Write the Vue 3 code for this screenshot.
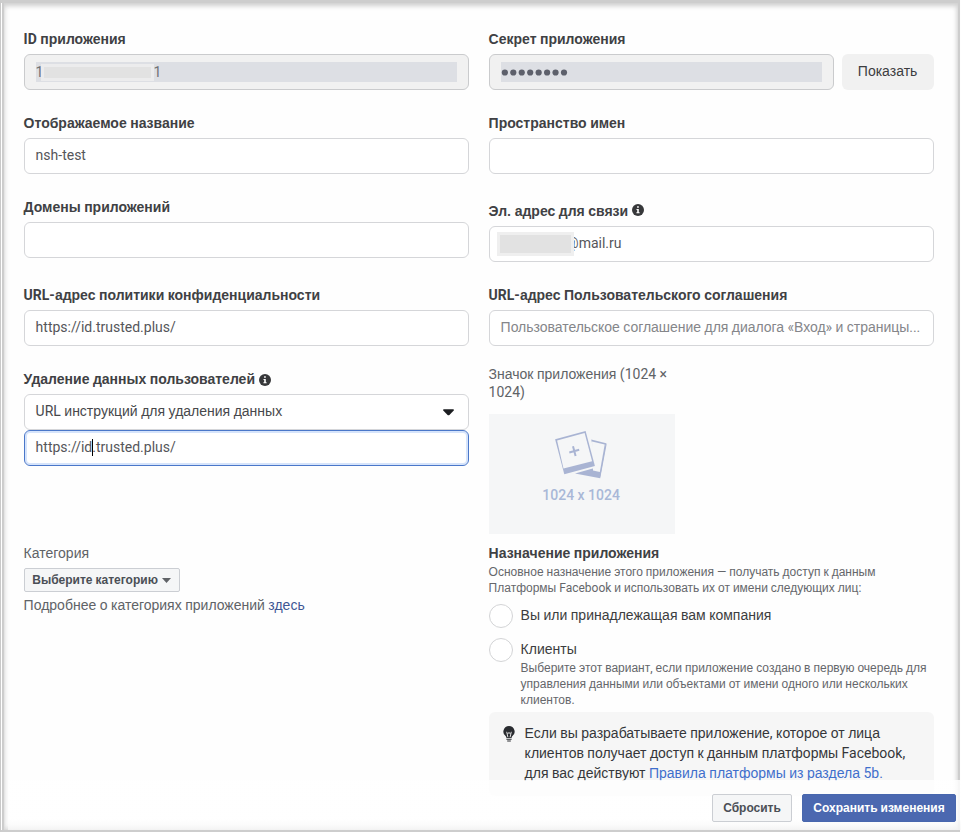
<script setup>
import { h } from 'vue'

// Latin runs, digits and spaces use Roboto; Cyrillic runs use the fallback face.
const T = (props) =>
  h('span', (props.t.match(/[А-Яа-яЁё]+|[^А-Яа-яЁё]+/g) || []).map((run) =>
    /[А-Яа-яЁё]/.test(run) ? run : h('span', { class: 'latin' }, run)
  ))
T.props = ['t']
</script>

<template>
  <div class="page">
    <main class="columns">
      <section class="col">
        <div class="field">
          <label class="label"><T t="ID приложения" /></label>
          <div class="input disabled">
            <div class="value-fill"><T t="1" /><span class="mask mask-id"></span><T t="1" /></div>
          </div>
        </div>
        <div class="field">
          <label class="label"><T t="Отображаемое название" /></label>
          <div class="input"><T t="nsh-test" /></div>
        </div>
        <div class="field">
          <label class="label"><T t="Домены приложений" /></label>
          <div class="input"></div>
        </div>
        <div class="field wide-gap">
          <label class="label"><T t="URL-адрес политики конфиденциальности" /></label>
          <div class="input"><T t="https://id.trusted.plus/" /></div>
        </div>
        <div class="field">
          <label class="label">
            <T t="Удаление данных пользователей" />
            <svg class="info" viewBox="0 0 12 12"><circle cx="6" cy="6" r="6" /><path d="M4.5 4.9h2.3v3.4h.8v1H4.4v-1h.8V5.9h-.7zM5.1 2.2h1.7v1.6H5.1z" /></svg>
          </label>
          <div class="input select">
            <T t="URL инструкций для удаления данных" />
            <svg class="caret" viewBox="0 0 12 7"><path d="M1 0h10q1 0 1 1L7 6.2q-1 .8-2 0L0 1q0-1 1-1z" /></svg>
          </div>
          <div class="input focused"><T t="https://id" /><span class="cursor"></span><T t=".trusted.plus/" /></div>
        </div>
        <div class="category">
          <div class="plain-label">Категория</div>
          <button class="btn category-btn">
            <T t="Выберите категорию" />
            <svg class="small-caret" viewBox="0 0 9 5"><path d="M0 0h9L4.5 5z" /></svg>
          </button>
          <div class="more"><T t="Подробнее о категориях приложений " /><a class="link-dark">здесь</a></div>
        </div>
      </section>

      <section class="col">
        <div class="field">
          <label class="label"><T t="Секрет приложения" /></label>
          <div class="secret-row">
            <div class="input disabled">
              <div class="value-fill">
                <svg class="dots" width="68" height="7" viewBox="0 0 68 7"><circle v-for="n in 8" :key="n" :cx="8.45 * n - 4.6" cy="3.5" r="3.1" /></svg>
              </div>
            </div>
            <button class="show">Показать</button>
          </div>
        </div>
        <div class="field">
          <label class="label"><T t="Пространство имен" /></label>
          <div class="input"></div>
        </div>
        <div class="field wide-gap">
          <label class="label">
            <T t="Эл. адрес для связи" />
            <svg class="info raised" viewBox="0 0 12 12"><circle cx="6" cy="6" r="6" /><path d="M4.5 4.9h2.3v3.4h.8v1H4.4v-1h.8V5.9h-.7zM5.1 2.2h1.7v1.6H5.1z" /></svg>
          </label>
          <div class="input mail"><span class="mask mask-mail"></span><T t="@mail.ru" /></div>
        </div>
        <div class="field">
          <label class="label"><T t="URL-адрес Пользовательского соглашения" /></label>
          <div class="input placeholder"><T t="Пользовательское соглашение для диалога «Вход» и страницы..." /></div>
        </div>
        <div class="icon-field">
          <div class="icon-label"><T t="Значок приложения (1024 ×" /><br /><T t="1024)" /></div>
          <div class="upload">
            <svg class="photos" viewBox="0 0 54 50" width="54" height="50">
              <path d="M36.2 8.6 51.2 12.2 45.2 46z" fill="#a9b4d3" />
              <path d="M51.9 11.7 45.2 47.2 20 42.6 39.5 37z" fill="#a9b4d3" />
              <path d="M37 10.6 49.7 13.4 44.8 40.9 38 39.5z" fill="#f5f6f7" />
              <path d="M-1 7.6 31.4-1.2 41.2 35.4 9 44.2z" fill="#f5f6f7" />
              <path d="M.1 8.2 30.6.1 39.9 35.1 9.3 43.2z" fill="#a9b4d3" />
              <path d="M2.1 9.4 29.6 2.1 37.1 30.3 8.5 37.6z" fill="#f5f6f7" />
              <path d="M14.3 21.5 24.2 18.8M18 15.2 20.6 25.1" fill="none" stroke="#a9b4d3" stroke-width="2" />
            </svg>
            <div class="upload-text"><T t="1024 x 1024" /></div>
          </div>
        </div>
        <div class="purpose">
          <div class="label purpose-title"><T t="Назначение приложения" /></div>
          <p class="small"><T t="Основное назначение этого приложения — получать доступ к данным" /><br /><T t="Платформы Facebook и использовать их от имени следующих лиц:" /></p>
          <div class="option first">
            <span class="radio"></span>
            <div class="option-text"><T t="Вы или принадлежащая вам компания" /></div>
          </div>
          <div class="option">
            <span class="radio"></span>
            <div>
              <div class="option-text">Клиенты</div>
              <p class="small"><T t="Выберите этот вариант, если приложение создано в первую очередь для" /><br /><T t="управления данными или объектами от имени одного или нескольких" /><br /><T t="клиентов." /></p>
            </div>
          </div>
          <div class="notice">
            <svg class="bulb" viewBox="0 0 12 16" width="12" height="16">
              <path fill="#2a2c30" d="M6 0a5.6 5.6 0 0 0-3.2 10.2q.6.5.6 1.8h5.2q0-1.3.6-1.8A5.6 5.6 0 0 0 6 0z" />
              <path fill="none" stroke="#f5f5f5" stroke-width=".9" d="M3.7 5.8 4.9 11.2M8.3 5.8 7.1 11.2M4.6 8 6 6.4 7.4 8" />
              <path fill="#2a2c30" d="M3.4 12.8h5.2v1H3.4zM4.2 14.6h3.6v1H4.2z" />
            </svg>
            <p class="notice-text"><T t="Если вы разрабатываете приложение, которое от лица" /><br /><T t="клиентов получает доступ к данным платформы Facebook," /><br /><T t="для вас действуют " /><a class="link"><T t="Правила платформы из раздела 5b." /></a></p>
          </div>
        </div>
      </section>
    </main>
    <div class="frame"></div>
    <footer class="footer">
      <button class="btn reset">Сбросить</button>
      <button class="btn save"><T t="Сохранить изменения" /></button>
    </footer>
  </div>
</template>

<style>
body { margin: 0; background: #fff; }
.latin { font-family: Roboto, sans-serif; white-space: pre; }
</style>

<style scoped>
* { box-sizing: border-box; }
.page {
  position: relative;
  width: 961px;
  height: 832px;
  overflow: hidden;
  background: #fefefe;
  color: #404144;
  font: 14px/20px "Liberation Sans", sans-serif;
}
.frame {
  position: absolute;
  inset: 0 1px 0 0;
  border: 2px solid #cdcdcd;
  border-left: 1px solid #c9c9c9;
  border-top-width: 3px;
  box-shadow: inset 1px 0 #fff, inset 3px 0 1px #ccc, inset 0 3px 5px #d2d2d2, inset 4px 0 5px #ddd, inset -1px -2px 5px #e2e2e2;
  pointer-events: none;
}
.columns {
  display: grid;
  grid-template-columns: 445px 445px;
  gap: 20px;
  padding: 29px 0 0 23.6px;
}
.col { display: flex; flex-direction: column; }
.field { margin-bottom: 23px; }
.wide-gap { margin-top: 4px; }
.label {
  display: flex;
  align-items: center;
  height: 20px;
  margin-bottom: 5px;
  font-weight: 700;
  white-space: pre;
}
.input {
  display: flex;
  align-items: center;
  height: 36px;
  padding: 0 11px 2px;
  border: 1px solid #d5d6d9;
  border-radius: 6px;
  background: #fff;
  color: #55565a;
  white-space: pre;
}
.disabled { flex: 1; padding: 0 11px; background: #f1f1f1; border-color: #cacbcd; }
.value-fill {
  display: flex;
  align-items: center;
  width: 100%;
  height: 20px;
  background: #dddfe4;
  color: #707276;
}
.dots { fill: #5d606b; }
.mask { flex: none; background: #e2e2e2; }
.mask-id { width: 113px; height: 17px; margin: 0 -1px 0 -2px; border: 3px solid #ececed; }
.mask-mail { position: relative; z-index: 1; width: 77px; height: 24px; margin-right: -8px; border: 3px solid #efefef; }
.mail { padding-left: 7.5px; padding-bottom: 0; }
.mail :deep(.latin) { position: relative; top: -1px; }
.secret-row { display: flex; gap: 8px; }
button { font-family: inherit; cursor: pointer; }
.show {
  width: 92px;
  height: 36px;
  padding: 0 0 2px;
  border: 0;
  border-radius: 6px;
  background: #f1f1f1;
  color: #3c3d40;
  font-size: 14px;
}
.info { width: 12px; height: 12px; margin: 1px 0 0 4px; fill: #37383a; }
.raised { margin-top: -2px; margin-left: 3.5px; }
.info path { fill: #fff; }
.select { justify-content: space-between; padding-right: 13.5px; color: #47484b; }
.caret { width: 11px; height: 7px; margin-top: 2px; fill: #1c1e21; }
.focused { border-color: #4a77c9; box-shadow: inset 0 0 0 2px #d6e4fb; }
.cursor { width: 1px; height: 17px; margin-right: -1px; background: #000; }
.placeholder { color: #85868a; letter-spacing: -.03px; }
.category { margin-top: 54px; color: #606367; }
.plain-label { height: 25px; }
.btn {
  display: flex;
  align-items: center;
  justify-content: center;
  padding: 0;
  border: 1px solid #cbced3;
  border-radius: 2px;
  background: #f5f6f7;
  color: #4b4f56;
  font-size: 12px;
  font-weight: 700;
  white-space: pre;
}
.category-btn { width: 156px; height: 24px; }
.small-caret { width: 9px; height: 5px; margin-left: 4px; margin-top: 1px; fill: #606367; }
.more { margin-top: 3px; }
.link-dark { color: #3f5794; }
.icon-field { margin-top: -4px; color: #606367; }
.icon-label { height: 49px; line-height: 18px; }
.upload {
  display: flex;
  flex-direction: column;
  align-items: center;
  width: 186px;
  height: 120px;
  padding-top: 17px;
  background: #f5f6f7;
}
.photos { flex: none; }
.upload-text { margin-top: 4px; margin-left: -1px; color: #a9b8d7; font-weight: 500; }
.purpose { padding-top: 9px; }
.purpose-title { margin-bottom: 2px; }
.purpose > .small { height: 32px; margin-top: -1px; }
.small { margin: 0; color: #65676b; font-size: 12px; line-height: 16px; white-space: pre; }
.option { display: flex; gap: 8px; margin-top: 8px; }
.first { height: 26px; }
.radio {
  flex: none;
  width: 24px;
  height: 24px;
  border: 1px solid #d3d4d6;
  border-radius: 50%;
  background: #fff;
}
.option-text { height: 22px; padding-top: 1px; color: #3c3d40; white-space: pre; }
.notice {
  display: flex;
  gap: 10px;
  height: 84px;
  margin-top: 4px;
  padding: 11px 14px;
  border-radius: 6px;
  background: #f6f6f6;
  color: #35363a;
}
.bulb { flex: none; margin-top: 3px; }
.notice-text { margin: 0; white-space: pre; }
.link { color: #3f6fcc; }
.footer {
  position: absolute;
  right: 0;
  bottom: 2px;
  left: 8px;
  display: flex;
  justify-content: flex-end;
  gap: 10px;
  height: 50px;
  padding: 14px 5px 0 0;
  background: linear-gradient(rgba(255, 255, 255, .82) 78%, rgba(247, 247, 247, .82));
}
.reset { width: 80px; height: 28px; }
.save { width: 154px; height: 28px; border-color: #4867ae; background: #4b68b0; color: #fff; }
</style>
